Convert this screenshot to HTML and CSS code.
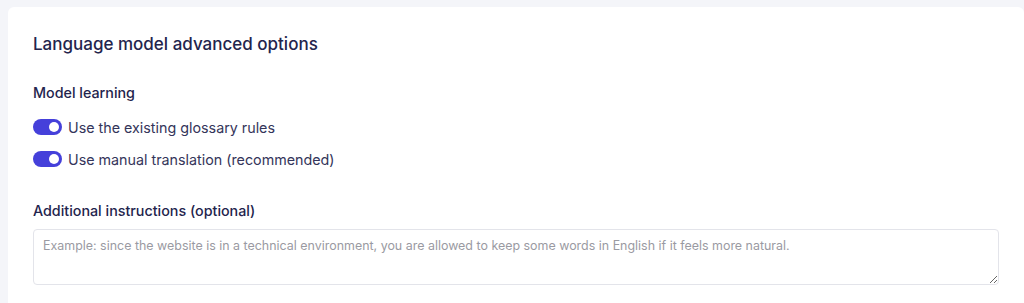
FILE: index.html
```html
<!DOCTYPE html>
<html lang="en">
<head>
  <meta charset="UTF-8">
  <meta name="viewport" content="width=device-width, initial-scale=1.0">
  <title>Language model advanced options</title>
  <link rel="stylesheet" href="styles.css">
</head>
<body>
  <section class="card">
    <h2 class="card-title">Language model advanced options</h2>

    <div class="group">
      <h3 class="group-title">Model learning</h3>
      <label class="switch-row">
        <input type="checkbox" checked>
        <span class="switch"></span>
        <span class="switch-label">Use the existing glossary rules</span>
      </label>
      <label class="switch-row">
        <input type="checkbox" checked>
        <span class="switch"></span>
        <span class="switch-label">Use manual translation (recommended)</span>
      </label>
    </div>

    <div class="group">
      <label class="group-title" for="instructions">Additional instructions (optional)</label>
      <textarea id="instructions" placeholder="Example: since the website is in a technical environment, you are allowed to keep some words in English if it feels more natural."></textarea>
    </div>
  </section>
</body>
</html>
```

FILE: styles.css
```css
* { box-sizing: border-box; }
body {
  margin: 0;
  padding: 7px 0 0 8px;
  background: #f4f5f9;
  font-family: 'Inter', 'Noto Sans', sans-serif;
  color: #23244d;
}
.card {
  width: 1016px;
  background: #fff;
  border-radius: 6px;
  padding: 26px 25px 20px;
}
.card-title {
  margin: 0 0 28px;
  font-size: 17px;
  font-weight: 500;
  line-height: 22px;
}
.group { margin-bottom: 26px; }
.group-title {
  display: block;
  margin: 0 0 8px;
  font-size: 14.3px;
  font-weight: 500;
  line-height: 20px;
}
.switch-row {
  display: flex;
  align-items: center;
  gap: 6px;
  height: 32px;
  cursor: pointer;
}
.switch-row input { display: none; }
.switch {
  position: relative;
  width: 29px;
  height: 16px;
  border-radius: 8px;
  background: #d4d6e0;
}
.switch::after {
  content: "";
  position: absolute;
  top: 3px;
  left: 3px;
  width: 10px;
  height: 10px;
  border-radius: 50%;
  background: #fff;
}
.switch-row input:checked + .switch { background: #4540da; }
.switch-row input:checked + .switch::after { left: 16px; }
.switch-label {
  font-size: 14.3px;
  color: #34355a;
}
textarea {
  display: block;
  width: 100%;
  height: 56px;
  padding: 8px 9px;
  border: 1px solid #e3e4ea;
  border-radius: 4px;
  font-family: 'Inter', 'Noto Sans', sans-serif;
  font-size: 12.45px;
  color: #333;
  resize: vertical;
}
textarea::placeholder { color: #9a9aa2; }
textarea:focus { outline: none; border-color: #4540da; }
```
